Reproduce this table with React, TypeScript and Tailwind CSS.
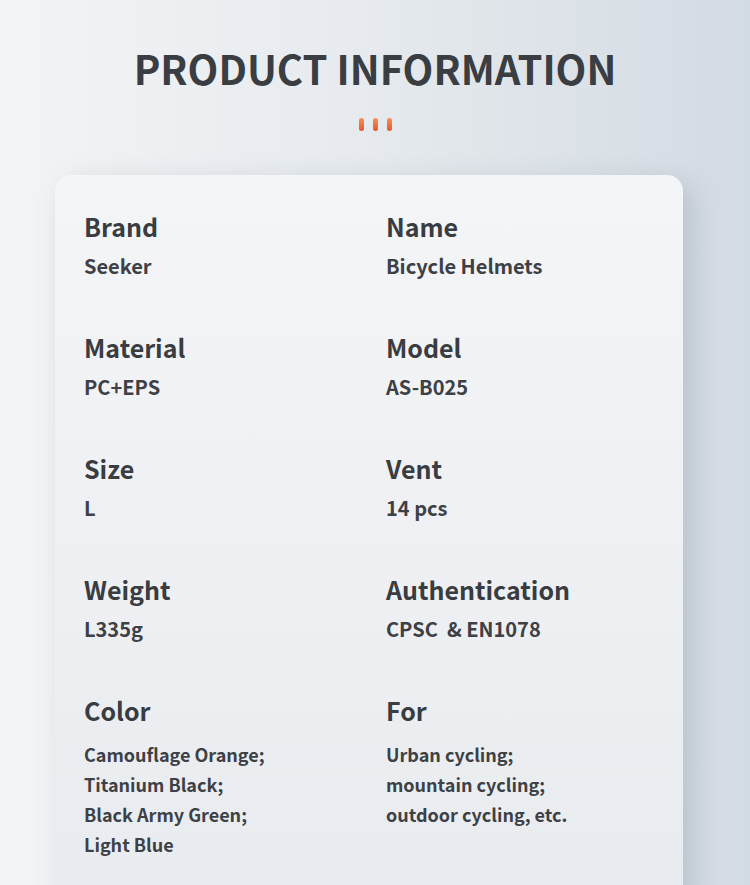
const rows: [string, string[], string, string[]][] = [
  ["Brand", ["Seeker"], "Name", ["Bicycle Helmets"]],
  ["Material", ["PC+EPS"], "Model", ["AS-B025"]],
  ["Size", ["L"], "Vent", ["14 pcs"]],
  ["Weight", ["L335g"], "Authentication", ["CPSC \u00a0& EN1078"]],
  [
    "Color",
    ["Camouflage Orange;", "Titanium Black;", "Black Army Green;", "Light Blue"],
    "For",
    ["Urban cycling;", "mountain cycling;", "outdoor cycling, etc."],
  ],
];

function Field({ label, lines }: { label: string; lines: string[] }) {
  const multi = lines.length > 1;
  return (
    <div>
      <div className="text-[25px] leading-[36px] font-bold text-[#393c41]">{label}</div>
      <div className={multi ? "mt-[11px]" : "mt-[7px]"}>
        {lines.map((line) => (
          <div
            key={line}
            className={
              multi
                ? "text-[18px] leading-[30px] font-bold text-[#3d4045]"
                : "text-[20px] leading-[30px] font-bold text-[#3d4045]"
            }
          >
            {line}
          </div>
        ))}
      </div>
    </div>
  );
}

export default function App() {
  return (
    <div
      className="w-[750px] h-[885px] overflow-hidden bg-gradient-to-r from-[#f3f4f6] via-[#e6eaee] to-[#d3dbe3]"
      style={{ fontFamily: '"Noto Sans CJK SC", "Noto Sans", sans-serif' }}
    >
      <div className="pt-[40px] flex flex-col items-center">
        <h1 className="text-[40px] leading-[56px] font-bold text-[#3a3d42]">PRODUCT INFORMATION</h1>
        <div className="mt-[22px] flex gap-[9px]">
          <span className="w-[5px] h-[13px] rounded-full bg-gradient-to-b from-[#f49058] to-[#e6572a]" />
          <span className="w-[5px] h-[13px] rounded-full bg-gradient-to-b from-[#f49058] to-[#e6572a]" />
          <span className="w-[5px] h-[13px] rounded-full bg-gradient-to-b from-[#f49058] to-[#e6572a]" />
        </div>
      </div>
      <div className="mt-[44px] ml-[55px] w-[628px] h-[760px] rounded-[16px] bg-gradient-to-b from-[#f4f5f7] to-[#e8ebef] shadow-[10px_8px_28px_rgba(110,125,140,0.28)] pt-[33px] pl-[29px]">
        <div className="grid grid-cols-[302px_1fr] gap-y-[48px]">
          {rows.map(([l1, v1, l2, v2]) => (
            <div key={l1} className="contents">
              <Field label={l1} lines={v1} />
              <Field label={l2} lines={v2} />
            </div>
          ))}
        </div>
      </div>
    </div>
  );
}
